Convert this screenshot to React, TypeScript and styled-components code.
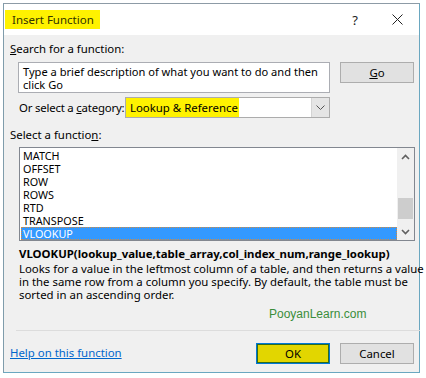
import React from 'react'
import styled, { createGlobalStyle } from 'styled-components'

const GlobalStyle = createGlobalStyle`
  html, body {
    margin: 0;
    padding: 0;
    background: #ffffff;
  }
  body {
    font-family: "Noto Sans", "Open Sans", sans-serif;
    font-size: 11.4px;
    color: #000000;
  }
`

const functions = ['MATCH', 'OFFSET', 'ROW', 'ROWS', 'RTD', 'TRANSPOSE', 'VLOOKUP']
const selected = 'VLOOKUP'

const App = () => {
  return (
    <>
      <GlobalStyle />
      <Dialog>
        <TitleBar>
          <Title>Insert Function</Title>
          <TitleButtons>
            <HelpMark>?</HelpMark>
            <CloseIcon width="11" height="11" viewBox="0 0 11 11">
              <path d="M0.5 0.5 L10.5 10.5 M10.5 0.5 L0.5 10.5" stroke="#222" strokeWidth="1" fill="none" />
            </CloseIcon>
          </TitleButtons>
        </TitleBar>
        <Body>
          <Label>
            <u>S</u>earch for a function:
          </Label>
          <SearchRow>
            <SearchBox>
              Type a brief description of what you want to do and then
              <br />
              click Go
            </SearchBox>
            <Button>
              <u>G</u>o
            </Button>
          </SearchRow>
          <CategoryRow>
            <CategoryLabel>
              Or select a <u>c</u>ategory:
            </CategoryLabel>
            <Select>
              <SelectValue>
                <Highlight>Lookup &amp; Reference</Highlight>
              </SelectValue>
              <SelectArrow>
                <svg width="9" height="5" viewBox="0 0 9 5">
                  <polyline points="0.5,0.5 4.5,4.5 8.5,0.5" stroke="#555" strokeWidth="1" fill="none" />
                </svg>
              </SelectArrow>
            </Select>
          </CategoryRow>
          <SectionLabel>
            Select a functio<u>n</u>:
          </SectionLabel>
          <ListBox>
            <Items>
              {functions.map((f) => (
                <Item key={f} $selected={f === selected}>
                  {f}
                </Item>
              ))}
            </Items>
            <ScrollBar>
              <ScrollArrow>
                <svg width="9" height="6" viewBox="0 0 9 6">
                  <polyline points="1,5 4.5,1.5 8,5" stroke="#606060" strokeWidth="1.6" fill="none" />
                </svg>
              </ScrollArrow>
              <ScrollTrack>
                <Thumb />
              </ScrollTrack>
              <ScrollArrow>
                <svg width="9" height="6" viewBox="0 0 9 6">
                  <polyline points="1,1 4.5,4.5 8,1" stroke="#606060" strokeWidth="1.6" fill="none" />
                </svg>
              </ScrollArrow>
            </ScrollBar>
          </ListBox>
          <Signature>VLOOKUP(lookup_value,table_array,col_index_num,range_lookup)</Signature>
          <Description>
            Looks for a value in the leftmost column of a table, and then returns a value
            <br />
            in the same row from a column you specify. By default, the table must be
            <br />
            sorted in an ascending order.
          </Description>
          <Watermark>PooyanLearn.com</Watermark>
          <Separator />
          <Footer>
            <HelpLink href="#">Help on this function</HelpLink>
            <FooterButtons>
              <Button $primary>OK</Button>
              <Button>Cancel</Button>
            </FooterButtons>
          </Footer>
        </Body>
      </Dialog>
    </>
  )
}

const Dialog = styled.div`
  margin: 3px 0 0 3px;
  width: 415px;
  height: 368px;
  border: 1px solid #6aa7c0;
  border-top-color: #8d9ba6;
  border-left-color: #7f9cab;
  background: #f0f0f0;
  display: flex;
  flex-direction: column;
`

const TitleBar = styled.div`
  height: 31px;
  background: #ffffff;
  display: flex;
  align-items: center;
  justify-content: space-between;
  padding: 0 0 0 1px;
`

const Title = styled.div`
  background: #fff200;
  color: #333300;
  font-size: 11.5px;
  height: 19px;
  line-height: 19px;
  padding: 0 6px 0 7px;
`

const TitleButtons = styled.div`
  display: flex;
  align-items: center;
  gap: 34px;
  padding-right: 16px;
`

const HelpMark = styled.span`
  font-size: 13px;
  color: #222;
`

const CloseIcon = styled.svg`
  display: block;
`

const Body = styled.div`
  flex: 1;
  display: flex;
  flex-direction: column;
  padding: 6px 5px 0 6px;
`

const Label = styled.div`
  line-height: 15px;
  white-space: nowrap;
`

const SearchRow = styled.div`
  display: flex;
  align-items: flex-start;
  margin-top: 6px;
  padding-left: 8px;
  gap: 10px;
`

const SearchBox = styled.div`
  box-sizing: border-box;
  width: 312px;
  height: 31px;
  background: #ffffff;
  border: 1px solid #abadb3;
  padding: 2px 4px 0;
  font-size: 11.1px;
  line-height: 13px;
  white-space: nowrap;
`

const Button = styled.button<{ $primary?: boolean }>`
  box-sizing: border-box;
  width: 74px;
  height: 21px;
  padding: 0;
  font-family: inherit;
  font-size: 11.4px;
  color: #000;
  background: ${(p) => (p.$primary ? '#e2d600' : '#e1e1e1')};
  border: 1px solid ${(p) => (p.$primary ? '#0078d7' : '#adadad')};
  box-shadow: ${(p) => (p.$primary ? 'inset 0 0 0 1px #2f6b1f' : 'none')};
`

const CategoryRow = styled.div`
  display: flex;
  align-items: center;
  gap: 3px;
  margin-top: 4px;
  padding-left: 9px;
`

const CategoryLabel = styled(Label)`
  width: 103px;
  letter-spacing: -0.2px;
`

const Select = styled.div`
  box-sizing: border-box;
  width: 205px;
  height: 21px;
  display: flex;
  background: #ffffff;
  border: 1px solid #acacac;
`

const SelectValue = styled.div`
  flex: 1;
  display: flex;
  align-items: stretch;
`

const Highlight = styled.div`
  width: 109px;
  padding-left: 4px;
  background: #fff200;
  display: flex;
  align-items: center;
  white-space: nowrap;
`

const SelectArrow = styled.div`
  width: 17px;
  border-left: 1px solid #d4d4d4;
  background: #e5e5e5;
  display: flex;
  align-items: center;
  justify-content: center;
`

const SectionLabel = styled(Label)`
  margin-top: 9px;
`

const ListBox = styled.div`
  box-sizing: border-box;
  margin: 5px 0 0 9px;
  width: 396px;
  height: 94px;
  background: #ffffff;
  border: 1px solid #828790;
  display: flex;
`

const Items = styled.div`
  flex: 1;
  padding: 1px 0 0 1px;
`

const Item = styled.div<{ $selected?: boolean }>`
  box-sizing: border-box;
  height: 13px;
  line-height: 13px;
  padding-left: 2px;
  font-size: 10.8px;
  color: ${(p) => (p.$selected ? '#ffffff' : '#000000')};
  background: ${(p) => (p.$selected ? '#3399ff' : 'transparent')};
  outline: ${(p) => (p.$selected ? '1px dotted #d48a3c' : 'none')};
  outline-offset: -1px;
`

const ScrollBar = styled.div`
  width: 17px;
  background: #f0f0f0;
  display: flex;
  flex-direction: column;
`

const ScrollArrow = styled.div`
  height: 17px;
  display: flex;
  align-items: center;
  justify-content: center;
`

const ScrollTrack = styled.div`
  flex: 1;
  display: flex;
  flex-direction: column;
  justify-content: flex-end;
`

const Thumb = styled.div`
  height: 21px;
  margin: 0 1px 4px;
  background: #cdcdcd;
`

const Signature = styled.div`
  margin: 5px 0 0 9px;
  font-weight: bold;
  line-height: 15px;
  white-space: nowrap;
`

const Description = styled.div`
  margin: 1px 0 0 9px;
  line-height: 13px;
  white-space: nowrap;
`

const Watermark = styled.div`
  margin: 5px 0 0 259px;
  color: #3a8d3a;
  font-family: "Liberation Sans", Arial, sans-serif;
  font-size: 12px;
  line-height: 16px;
`

const Separator = styled.div`
  margin: 8px 0 0 6px;
  height: 1px;
  width: 404px;
  background: #dcdcdc;
`

const Footer = styled.div`
  display: flex;
  align-items: center;
  justify-content: space-between;
  margin-top: 12px;
`

const HelpLink = styled.a`
  color: #0066cc;
  text-decoration: underline;
  margin-top: -3px;
`

const FooterButtons = styled.div`
  display: flex;
  gap: 10px;
`

export default App
